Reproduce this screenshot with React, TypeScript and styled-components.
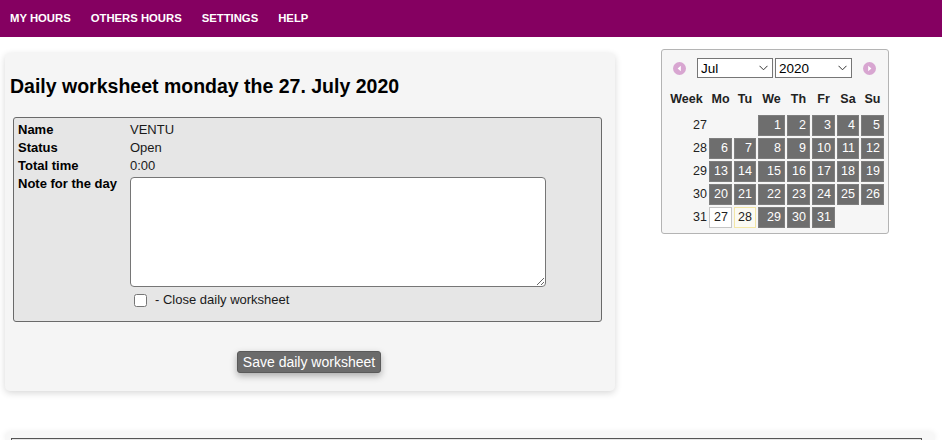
import React from "react";
import styled, { createGlobalStyle } from "styled-components";

const GlobalStyle = createGlobalStyle`
  html, body { margin: 0; padding: 0; overflow: hidden; }
  body {
    font-family: "Liberation Sans", Arial, sans-serif;
    background: #ffffff;
    color: #111;
  }
  * { box-sizing: border-box; }
`;

const Nav = styled.nav`
  height: 37px;
  background: #850061;
  display: flex;
  align-items: center;
  gap: 20px;
  padding: 0 0 1px 10px;
`;

const NavItem = styled.a`
  color: #fff;
  font-size: 11.3px;
  font-weight: bold;
  text-decoration: none;
`;

const Main = styled.div`
  display: flex;
  align-items: flex-start;
`;

const Card = styled.section`
  margin: 16px 0 0 5px;
  width: 610px;
  height: 338px;
  background: #f5f5f5;
  border-radius: 5px;
  box-shadow: 0 2px 7px rgba(0, 0, 0, 0.16);
  padding: 0 5px;
  display: flex;
  flex-direction: column;
`;

const Title = styled.h1`
  margin: 21px 0 19px 0;
  font-size: 19.5px;
  line-height: 24px;
  font-weight: bold;
  color: #000;
`;

const Box = styled.div`
  margin-left: 3px;
  width: 589px;
  background: #e6e6e6;
  border: 1px solid #6a6a6a;
  border-radius: 3px;
  padding: 3px 4px 12px 4px;
  display: grid;
  grid-template-columns: 112px 1fr;
  font-size: 13px;
  line-height: 18px;
`;

const Label = styled.div`
  font-weight: bold;
  color: #000;
`;

const Value = styled.div`
  color: #1a1a1a;
`;

const NoteArea = styled.textarea`
  display: block;
  margin-top: 2px;
  width: 416px;
  height: 110px;
  border: 1px solid #767676;
  border-radius: 4px;
  background: #fff;
  font-family: inherit;
  font-size: 13px;
`;

const CheckRow = styled.label`
  grid-column: 2;
  display: flex;
  align-items: center;
  height: 18px;
  margin-top: 4px;
  color: #1a1a1a;
  font-size: 13px;
`;

const Check = styled.input`
  width: 13px;
  height: 13px;
  margin: 0 8px 0 4px;
`;

const ButtonRow = styled.div`
  display: flex;
  justify-content: center;
  margin-top: 29px;
`;

const SaveButton = styled.button`
  height: 22px;
  width: 144px;
  padding: 0;
  background: #6b6b6b;
  color: #fff;
  border: 1px solid #5a5a5a;
  border-radius: 3px;
  font-family: inherit;
  font-size: 14px;
  box-shadow: 0 3px 7px rgba(0, 0, 0, 0.3);
  margin-left: -2px;
`;

const Calendar = styled.aside`
  margin: 12px 0 0 46px;
  width: 228px;
  height: 185px;
  background: #f6f6f6;
  border: 1px solid #b4b4b4;
  border-radius: 3px;
  padding: 8px 4px 4px 4px;
`;

const NavRow = styled.div`
  display: flex;
  align-items: center;
  height: 20px;
`;

const RoundArrow = styled.span<{ $gap: number }>`
  display: flex;
  margin-left: ${(p) => p.$gap}px;
  width: 13px;
  height: 13px;
`;

const SelectWrap = styled.div<{ $w: number; $ml: number }>`
  position: relative;
  width: ${(p) => p.$w}px;
  height: 20px;
  margin-left: ${(p) => p.$ml}px;
`;

const Select = styled.select`
  appearance: none;
  width: 100%;
  height: 100%;
  border: 1px solid #767676;
  border-radius: 0;
  background: #fff;
  font-family: inherit;
  font-size: 13.5px;
  color: #000;
  padding: 0 0 0 3px;
`;

const Chevron = styled.svg`
  position: absolute;
  right: 5px;
  top: 7px;
  pointer-events: none;
`;

const HeadGrid = styled.div`
  display: grid;
  grid-template-columns: 41px 23px 22px 27px 23px 23px 22px 23px;
  column-gap: 2px;
  height: 20px;
  margin-top: 11px;
  align-items: center;
  font-size: 12.5px;
  font-weight: bold;
  color: #222;
`;

const HeadCell = styled.div`
  text-align: center;
`;

const DayGrid = styled.div`
  display: grid;
  grid-template-columns: 41px 23px 22px 27px 23px 23px 22px 23px;
  grid-auto-rows: 21px;
  gap: 2px;
  margin-top: 6px;
  font-size: 12.5px;
`;

const WeekNo = styled.div`
  text-align: right;
  line-height: 21px;
  color: #222;
`;

type Kind = "day" | "today" | "highlight" | "empty";

const Day = styled.div<{ $kind: Kind }>`
  text-align: right;
  padding-right: 3px;
  line-height: 19px;
  border: 1px solid
    ${(p) =>
      p.$kind === "day"
        ? "#7e7e7e"
        : p.$kind === "today"
        ? "#c5c5c5"
        : p.$kind === "highlight"
        ? "#f3e6a6"
        : "transparent"};
  background: ${(p) =>
    p.$kind === "day"
      ? "#6e6e6e"
      : p.$kind === "today"
      ? "#ffffff"
      : p.$kind === "highlight"
      ? "#fbfaf3"
      : "transparent"};
  color: ${(p) => (p.$kind === "day" ? "#fff" : "#222")};
`;

const BottomCard = styled.section`
  margin: 41px 0 0 5px;
  width: 930px;
  height: 8px;
  overflow: hidden;
  background: #f7f7f7;
  border-radius: 5px 5px 0 0;
  box-shadow: 0 0 6px rgba(0, 0, 0, 0.08);
  padding: 6px 0 0 6px;
`;

const InnerBox = styled.div`
  width: 911px;
  height: 40px;
  border: 1px solid #555;
  background: #e6e6e6;
`;

const ArrowIcon = ({ dir }: { dir: "l" | "r" }) => (
  <svg width="13" height="13" viewBox="0 0 13 13">
    <circle cx="6.5" cy="6.5" r="6.5" fill="#d8a6d1" />
    {dir === "l" ? (
      <polygon points="7.8,3.8 4.6,6.5 7.8,9.2" fill="#fff" />
    ) : (
      <polygon points="5.2,3.8 8.4,6.5 5.2,9.2" fill="#fff" />
    )}
  </svg>
);

const ChevronIcon = () => (
  <Chevron width="9" height="6" viewBox="0 0 9 6">
    <polyline points="0.5,0.8 4.5,4.8 8.5,0.8" fill="none" stroke="#333" strokeWidth="1" />
  </Chevron>
);

const weeks: { no: number; days: (number | null)[] }[] = [
  { no: 27, days: [null, null, 1, 2, 3, 4, 5] },
  { no: 28, days: [6, 7, 8, 9, 10, 11, 12] },
  { no: 29, days: [13, 14, 15, 16, 17, 18, 19] },
  { no: 30, days: [20, 21, 22, 23, 24, 25, 26] },
  { no: 31, days: [27, 28, 29, 30, 31, null, null] },
];

const kindOf = (d: number | null, week: number): Kind => {
  if (d === null) return "empty";
  if (week === 31 && d === 27) return "today";
  if (week === 31 && d === 28) return "highlight";
  return "day";
};

export default function App() {
  return (
    <>
      <GlobalStyle />
      <Nav>
        <NavItem href="#">MY HOURS</NavItem>
        <NavItem href="#">OTHERS HOURS</NavItem>
        <NavItem href="#">SETTINGS</NavItem>
        <NavItem href="#">HELP</NavItem>
      </Nav>
      <Main>
        <Card>
          <Title>Daily worksheet monday the 27. July 2020</Title>
          <Box>
            <Label>Name</Label>
            <Value>VENTU</Value>
            <Label>Status</Label>
            <Value>Open</Value>
            <Label>Total time</Label>
            <Value>0:00</Value>
            <Label>Note for the day</Label>
            <div>
              <NoteArea />
            </div>
            <CheckRow>
              <Check type="checkbox" />- Close daily worksheet
            </CheckRow>
          </Box>
          <ButtonRow>
            <SaveButton>Save daily worksheet</SaveButton>
          </ButtonRow>
        </Card>
        <Calendar>
          <NavRow>
            <RoundArrow $gap={7}>
              <ArrowIcon dir="l" />
            </RoundArrow>
            <SelectWrap $w={76} $ml={11}>
              <Select defaultValue="Jul">
                {["Jan", "Feb", "Mar", "Apr", "May", "Jun", "Jul", "Aug", "Sep", "Oct", "Nov", "Dec"].map((m) => (
                  <option key={m}>{m}</option>
                ))}
              </Select>
              <ChevronIcon />
            </SelectWrap>
            <SelectWrap $w={77} $ml={2}>
              <Select defaultValue="2020">
                <option>2019</option>
                <option>2020</option>
                <option>2021</option>
              </Select>
              <ChevronIcon />
            </SelectWrap>
            <RoundArrow $gap={11}>
              <ArrowIcon dir="r" />
            </RoundArrow>
          </NavRow>
          <HeadGrid>
            {["Week", "Mo", "Tu", "We", "Th", "Fr", "Sa", "Su"].map((h) => (
              <HeadCell key={h}>{h}</HeadCell>
            ))}
          </HeadGrid>
          <DayGrid>
            {weeks.map((w) => (
              <React.Fragment key={w.no}>
                <WeekNo>{w.no}</WeekNo>
                {w.days.map((d, i) => (
                  <Day key={i} $kind={kindOf(d, w.no)}>
                    {d ?? ""}
                  </Day>
                ))}
              </React.Fragment>
            ))}
          </DayGrid>
        </Calendar>
      </Main>
      <BottomCard>
        <InnerBox />
      </BottomCard>
    </>
  );
}
